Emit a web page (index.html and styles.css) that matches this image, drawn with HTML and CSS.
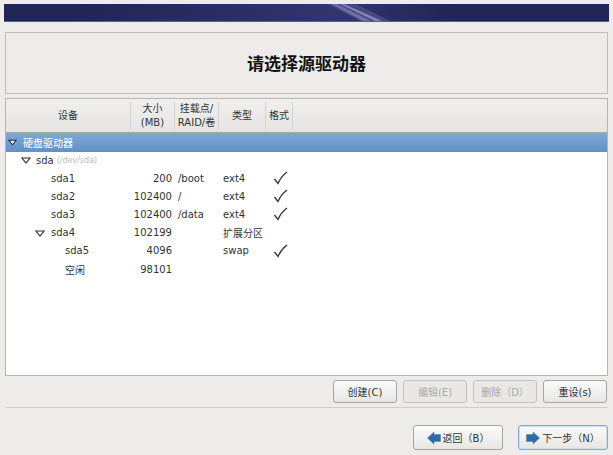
FILE: index.html
```html
<!DOCTYPE html>
<html lang="zh-CN">
<head>
    <meta charset="UTF-8">
    <meta name="viewport" content="width=device-width, initial-scale=1.0">
    <title>请选择源驱动器</title>
    <link rel="stylesheet" href="styles.css">
</head>
<body>
    <div class="banner">
        <svg class="banner-art" width="605" height="17" viewBox="0 0 605 17">
            <defs>
                <linearGradient id="glow" x1="0" x2="1" y1="0" y2="0">
                    <stop offset="0" stop-color="#343a74" stop-opacity="0"/>
                    <stop offset="0.7" stop-color="#343a74" stop-opacity="0.8"/>
                    <stop offset="1" stop-color="#343a74" stop-opacity="0"/>
                </linearGradient>
            </defs>
            <rect x="70" y="0" width="380" height="17" fill="url(#glow)"/>
            <polygon points="324,0 352,0 386,17 356,17" fill="#45497f"/>
            <polygon points="327,0 333,0 367,17 359,17" fill="#6f6ea6"/>
            <polygon points="336,0 340,0 378,17 371,17" fill="#8684b8"/>
        </svg>
    </div>

    <div class="title-box">
        <h1>请选择源驱动器</h1>
    </div>

    <div class="panel">
        <div class="head">
            <div class="col col-device">设备</div>
            <div class="col col-size">大小<br>(MB)</div>
            <div class="col col-mount">挂载点/<br>RAID/卷</div>
            <div class="col col-type">类型</div>
            <div class="col col-format">格式</div>
            <div class="col col-rest"></div>
        </div>

        <div class="group-row">
            <svg class="arrow" width="9" height="7" viewBox="0 0 10 7"><polygon points="1,1 9,1 5,6" fill="#fff" stroke="#1d2a3a" stroke-width="1.2"/></svg>
            <span>硬盘驱动器</span>
        </div>

        <div class="disk-row">
            <svg class="arrow" width="10" height="7" viewBox="0 0 10 7"><polygon points="1,1 9,1 5,6" fill="#fff" stroke="#333" stroke-width="1.1"/></svg>
            <span>sda</span> <span class="path">(/dev/sda)</span>
        </div>

        <div class="row">
            <div class="name indent-1">sda1</div>
            <div class="size">200</div>
            <div class="mount">/boot</div>
            <div class="type">ext4</div>
            <div class="format"><svg width="15" height="14" viewBox="0 0 15 14"><path d="M1.5 8 L5 12.5 Q8 5.5 14 1" fill="none" stroke="#2b3350" stroke-width="1.3"/></svg></div>
        </div>
        <div class="row">
            <div class="name indent-1">sda2</div>
            <div class="size">102400</div>
            <div class="mount">/</div>
            <div class="type">ext4</div>
            <div class="format"><svg width="15" height="14" viewBox="0 0 15 14"><path d="M1.5 8 L5 12.5 Q8 5.5 14 1" fill="none" stroke="#2b3350" stroke-width="1.3"/></svg></div>
        </div>
        <div class="row">
            <div class="name indent-1">sda3</div>
            <div class="size">102400</div>
            <div class="mount">/data</div>
            <div class="type">ext4</div>
            <div class="format"><svg width="15" height="14" viewBox="0 0 15 14"><path d="M1.5 8 L5 12.5 Q8 5.5 14 1" fill="none" stroke="#2b3350" stroke-width="1.3"/></svg></div>
        </div>
        <div class="row">
            <div class="name indent-1 has-arrow">
                <svg class="arrow" width="10" height="7" viewBox="0 0 10 7"><polygon points="1,1 9,1 5,6" fill="#fff" stroke="#333" stroke-width="1.1"/></svg>
                sda4
            </div>
            <div class="size">102199</div>
            <div class="mount"></div>
            <div class="type">扩展分区</div>
            <div class="format"></div>
        </div>
        <div class="row">
            <div class="name indent-2">sda5</div>
            <div class="size">4096</div>
            <div class="mount"></div>
            <div class="type">swap</div>
            <div class="format"><svg width="15" height="14" viewBox="0 0 15 14"><path d="M1.5 8 L5 12.5 Q8 5.5 14 1" fill="none" stroke="#2b3350" stroke-width="1.3"/></svg></div>
        </div>
        <div class="row">
            <div class="name indent-2">空闲</div>
            <div class="size">98101</div>
            <div class="mount"></div>
            <div class="type"></div>
            <div class="format"></div>
        </div>
    </div>

    <div class="actions">
        <button class="btn">创建(C)</button>
        <button class="btn" disabled>编辑(E)</button>
        <button class="btn" disabled>删除（D）</button>
        <button class="btn">重设(s)</button>
    </div>

    <div class="separator"></div>

    <div class="nav">
        <button class="btn btn-nav">
            <svg width="14" height="14" viewBox="0 0 16 15"><polygon points="0.5,7.5 8,0.5 8,3.5 15.5,3.5 15.5,11.5 8,11.5 8,14.5" fill="#2f6aa8" stroke="#4d86c0" stroke-width="0.6"/></svg>
            返回（B）
        </button>
        <button class="btn btn-nav btn-default">
            <svg width="14" height="14" viewBox="0 0 16 15"><polygon points="15.5,7.5 8,0.5 8,3.5 0.5,3.5 0.5,11.5 8,11.5 8,14.5" fill="#2f6aa8" stroke="#4d86c0" stroke-width="0.6"/></svg>
            下一步（N）
        </button>
    </div>
</body>
</html>
```

FILE: styles.css
```css
body {
    font-family: "DejaVu Sans", "Noto Sans CJK SC", sans-serif;
    font-size: 10px;
    color: #2e3436;
    background-color: #edecea;
    margin: 0;
    padding: 4px 4px 0 4px;
    height: 451px;
    overflow: hidden;
}

.banner {
    height: 17px;
    background: #1f2554;
    border-bottom: 1px solid #5a5f90;
    overflow: hidden;
}

.banner-art {
    display: block;
}

.title-box {
    margin: 10px 1px 0 1px;
    height: 60px;
    border: 1px solid #bdbdb9;
    display: flex;
    align-items: center;
    justify-content: center;
}

h1 {
    margin: 0 0 2px;
    font-size: 17px;
    font-weight: bold;
    color: #111;
}

.panel {
    margin: 4px 1px 0 1px;
    height: 276px;
    border: 1px solid #b5b5b1;
    background: #fff;
    overflow: hidden;
}

.head {
    display: flex;
    height: 33px;
    background: linear-gradient(#f0efed, #e6e5e2);
    border-bottom: 1px solid #a9a9a6;
    text-align: center;
    line-height: 14px;
}

.col {
    flex: none;
    display: flex;
    align-items: center;
    justify-content: center;
    box-sizing: border-box;
    margin: 3px 0;
    border-right: 1px solid #d4d3d0;
}

.col-device { width: 125px; }
.col-size { width: 44px; }
.col-mount { width: 44px; }
.col-type { width: 47px; }
.col-format { width: 27px; }
.col-rest { flex: 1; border-right: none; }

.group-row {
    display: flex;
    align-items: center;
    gap: 6px;
    height: 19px;
    padding-left: 2px;
    background: linear-gradient(#7fa7d6, #6291c6);
    color: #fff;
}

.disk-row {
    display: flex;
    align-items: center;
    gap: 5px;
    height: 17px;
    padding-left: 15px;
}

.disk-row .path {
    margin-left: -2px;
    font-size: 8px;
    color: #b9b9b9;
}

.row {
    display: flex;
    align-items: center;
    height: 18.2px;
}

.name {
    width: 125px;
    box-sizing: border-box;
}

.indent-1 { padding-left: 45px; }
.indent-2 { padding-left: 59px; }

.has-arrow {
    position: relative;
}

.has-arrow .arrow {
    position: absolute;
    left: 29px;
    top: 3px;
}

.size {
    width: 41px;
    text-align: right;
}

.mount {
    width: 44px;
    padding-left: 6px;
    box-sizing: border-box;
}

.type {
    width: 57px;
    padding-left: 7px;
    box-sizing: border-box;
}

.format {
    width: 20px;
}

.format svg {
    display: block;
}

.actions {
    display: flex;
    justify-content: flex-end;
    gap: 6px;
    margin-top: 4px;
    padding-right: 2px;
}

.btn {
    width: 64px;
    height: 23px;
    padding: 0;
    font-family: inherit;
    font-size: 10px;
    color: #2e3436;
    background: linear-gradient(#fbfbfa, #e7e6e3);
    border: 1px solid #a5a5a1;
    border-radius: 3px;
}

.btn:disabled {
    color: #a9a9a6;
    background: #e9e8e5;
    border-color: #c3c3bf;
}

.separator {
    height: 1px;
    margin: 4px 1px 0 1px;
    background: #cfcecb;
}

.nav {
    display: flex;
    justify-content: flex-end;
    gap: 15px;
    margin-top: 17px;
    padding-right: 1px;
}

.btn-nav {
    width: 90px;
    height: 25px;
    display: flex;
    align-items: center;
    justify-content: center;
    gap: 2px;
}

.btn-default {
    border-color: #86a9cf;
    box-shadow: inset 0 0 0 1px #cfdded;
}
```
